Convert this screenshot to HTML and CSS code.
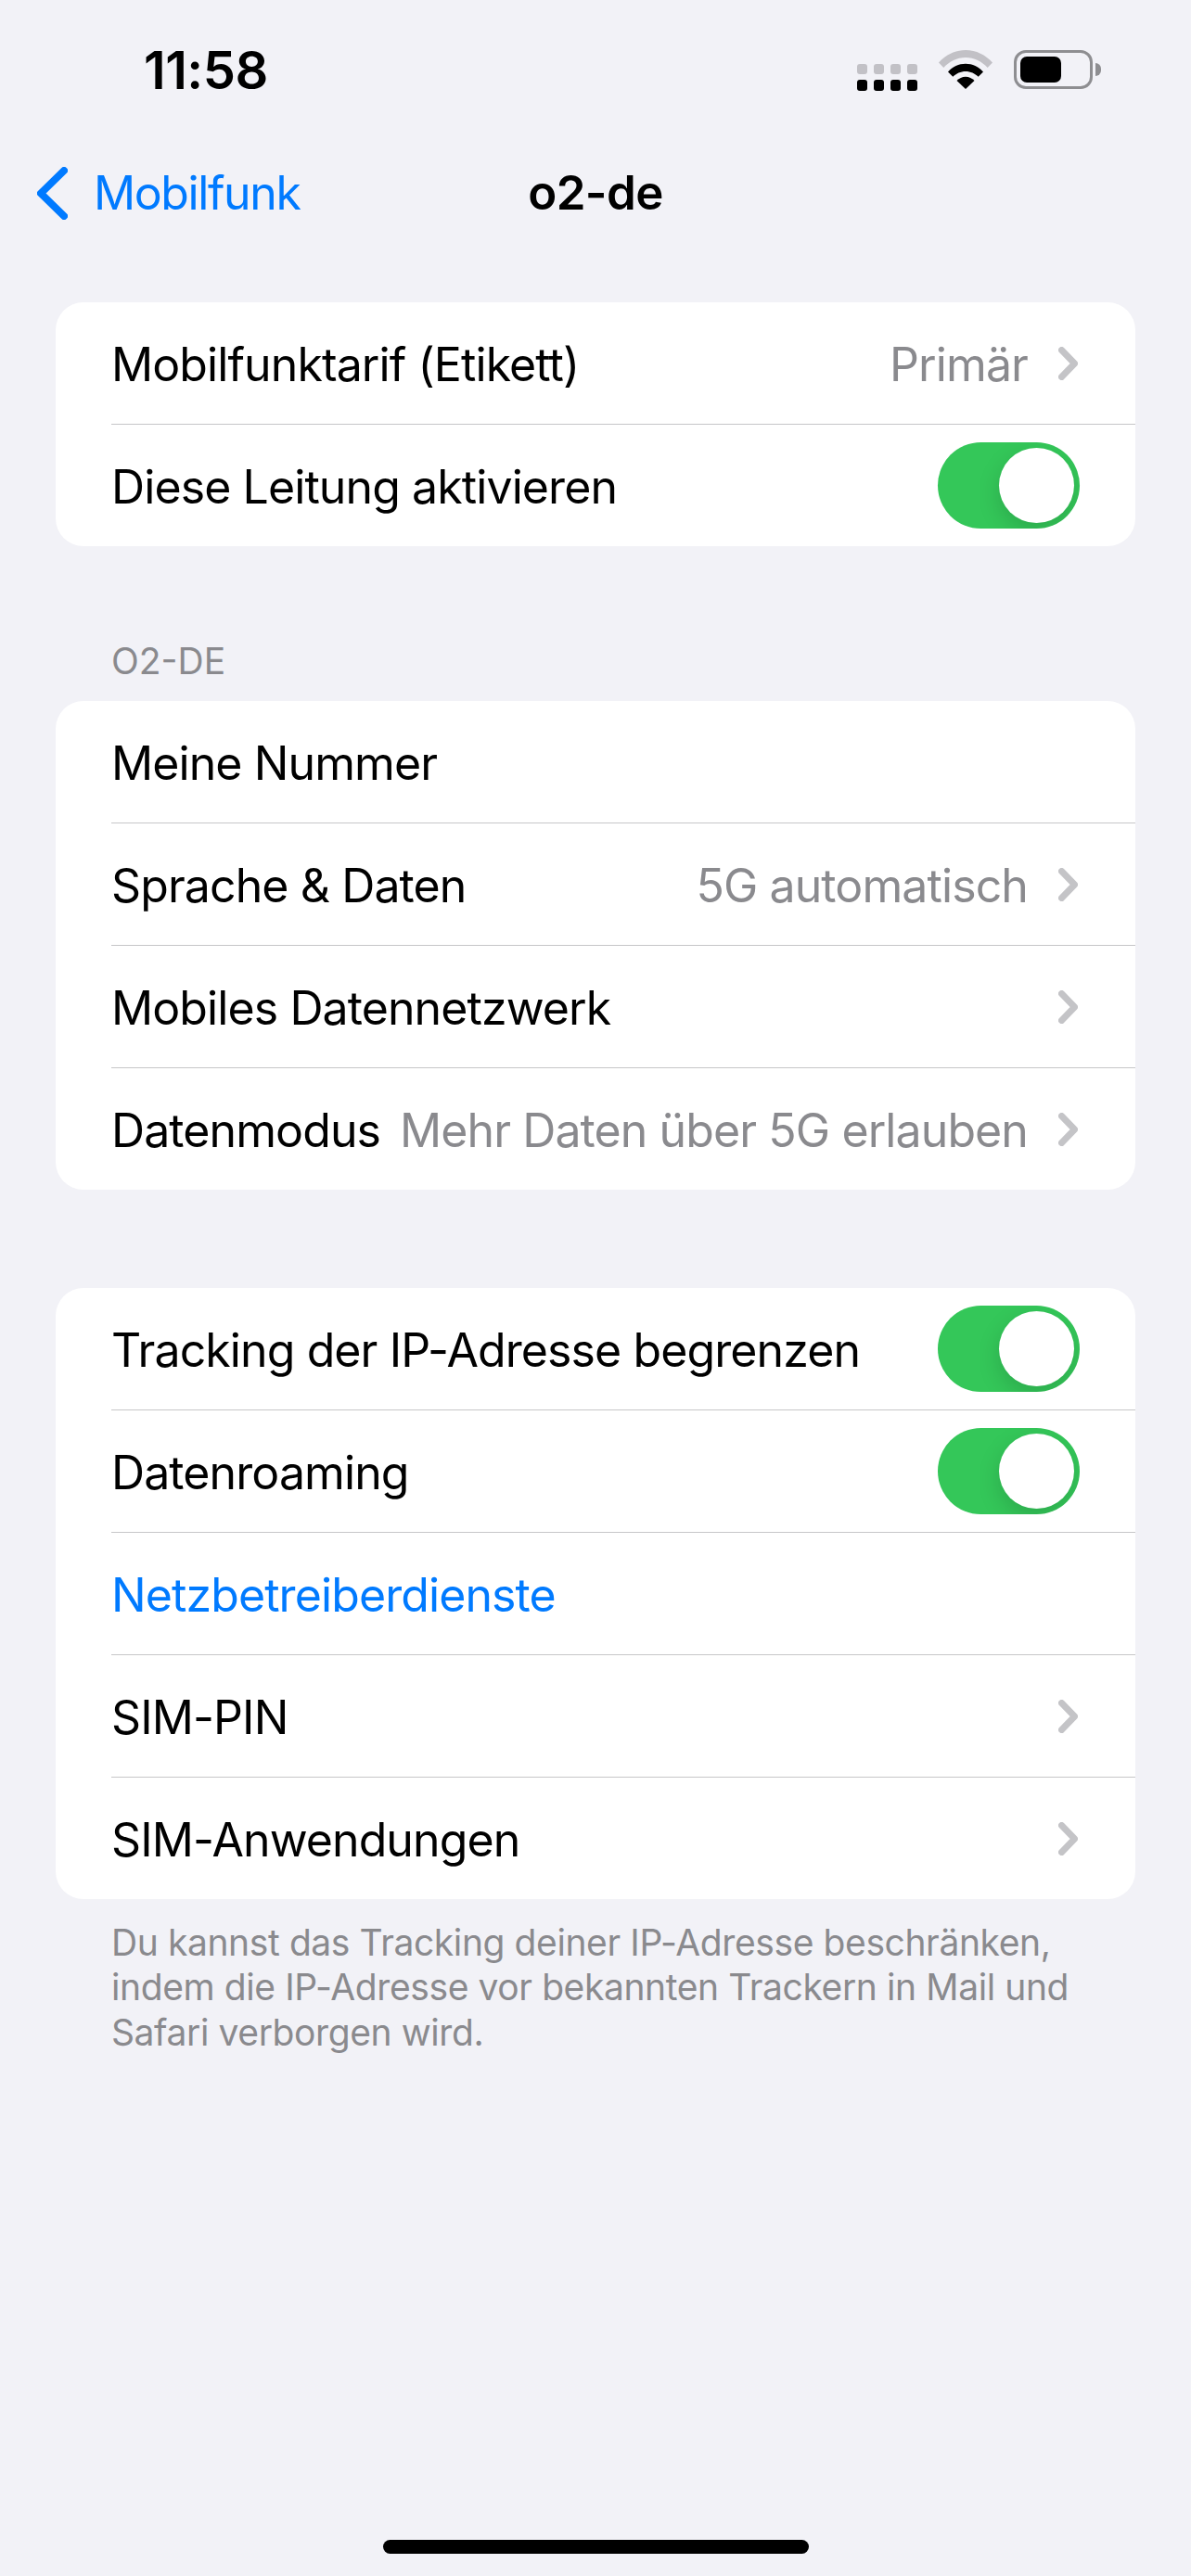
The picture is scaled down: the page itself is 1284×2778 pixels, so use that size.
FILE: index.html
```html
<!DOCTYPE html>
<html lang="de">
<head>
  <meta charset="UTF-8" />
  <title>o2-de</title>
  <link rel="stylesheet" href="styles.css">
</head>
<body>
  <div class="screen">
    <!-- Statusleiste -->
    <div class="status-bar">
      <span class="time">11:58</span>
      <div class="status-icons">
        <svg class="icon-signal" width="65" height="29" viewBox="0 0 65 29">
          <g fill="#c2c1c6">
            <rect x="0" y="0" width="11" height="11" rx="3"/>
            <rect x="18" y="0" width="11" height="11" rx="3"/>
            <rect x="36" y="0" width="11" height="11" rx="3"/>
            <rect x="54" y="0" width="11" height="11" rx="3"/>
          </g>
          <g fill="#000">
            <rect x="0" y="17" width="11" height="12" rx="3"/>
            <rect x="18" y="17" width="11" height="12" rx="3"/>
            <rect x="36" y="17" width="11" height="12" rx="3"/>
            <rect x="54" y="17" width="11" height="12" rx="3"/>
          </g>
        </svg>
        <svg class="icon-wifi" width="58" height="42" viewBox="0 0 58 42">
          <path fill="#c2c1c6" d="M0 13.500C7.500 5.200 17.600 0 29 0s21.500 5.200 29 13.500l-5.300 5.500C46.500 12.300 38.300 8 29 8S11.500 12.300 5.300 19z"/>
          <path fill="#000" d="M10 23.500C15 18.200 21.600 14.800 29 14.800s14 3.400 19 8.700l-5.300 5.300C39.200 25.300 34.300 23 29 23s-10.200 2.300-13.700 5.800z"/>
          <path fill="#000" d="M19.500 33C22 30.400 25.300 28.800 29 28.800s7 1.600 9.500 4.200L29 42z"/>
        </svg>
        <div class="battery">
          <div class="battery-body"><div class="battery-fill"></div></div>
          <div class="battery-nub"></div>
        </div>
      </div>
    </div>

    <!-- Navigation -->
    <div class="nav-bar">
      <a class="back-link">
        <svg width="33" height="57" viewBox="0 0 33 57">
          <path d="M29 4 4 28.500 29 53" fill="none" stroke="#007aff" stroke-width="8" stroke-linecap="round" stroke-linejoin="round"/>
        </svg>
        <span>Mobilfunk</span>
      </a>
      <span class="nav-title">o2-de</span>
    </div>

    <div class="content">
      <div class="card first-card">
        <div class="row">
          <span class="label">Mobilfunktarif (Etikett)</span>
          <span class="value">Primär</span>
          <svg class="chevron" width="21" height="36" viewBox="0 0 21 36"><path d="M3.500 3.500 17.500 18 3.500 32.500"/></svg>
        </div>
        <div class="row">
          <span class="label">Diese Leitung aktivieren</span>
          <div class="toggle"><div class="knob"></div></div>
        </div>
      </div>

      <div class="section-title">O2-DE</div>
      <div class="card">
        <div class="row">
          <span class="label">Meine Nummer</span>
        </div>
        <div class="row">
          <span class="label">Sprache &amp; Daten</span>
          <span class="value">5G automatisch</span>
          <svg class="chevron" width="21" height="36" viewBox="0 0 21 36"><path d="M3.500 3.500 17.500 18 3.500 32.500"/></svg>
        </div>
        <div class="row">
          <span class="label">Mobiles Datennetzwerk</span>
          <svg class="chevron" width="21" height="36" viewBox="0 0 21 36"><path d="M3.500 3.500 17.500 18 3.500 32.500"/></svg>
        </div>
        <div class="row">
          <span class="label">Datenmodus</span>
          <span class="value">Mehr Daten über 5G erlauben</span>
          <svg class="chevron" width="21" height="36" viewBox="0 0 21 36"><path d="M3.500 3.500 17.500 18 3.500 32.500"/></svg>
        </div>
      </div>

      <div class="card third-card">
        <div class="row">
          <span class="label">Tracking der IP-Adresse begrenzen</span>
          <div class="toggle"><div class="knob"></div></div>
        </div>
        <div class="row">
          <span class="label">Datenroaming</span>
          <div class="toggle"><div class="knob"></div></div>
        </div>
        <div class="row">
          <span class="label link">Netzbetreiberdienste</span>
        </div>
        <div class="row">
          <span class="label">SIM-PIN</span>
          <svg class="chevron" width="21" height="36" viewBox="0 0 21 36"><path d="M3.500 3.500 17.500 18 3.500 32.500"/></svg>
        </div>
        <div class="row">
          <span class="label">SIM-Anwendungen</span>
          <svg class="chevron" width="21" height="36" viewBox="0 0 21 36"><path d="M3.500 3.500 17.500 18 3.500 32.500"/></svg>
        </div>
      </div>

      <p class="footnote">Du kannst das Tracking deiner IP-Adresse beschränken, indem die IP-Adresse vor bekannten Trackern in Mail und Safari verborgen wird.</p>
    </div>

    <div class="home-indicator"></div>
  </div>
</body>
</html>
```

FILE: styles.css
```css
* { margin: 0; padding: 0; box-sizing: border-box; }
html, body { height: 100%; }
body {
  background: #f2f2f7;
  font-family: 'Inter', 'Liberation Sans', sans-serif;
  color: #000;
}
.screen {
  height: 2778px;
  display: flex;
  flex-direction: column;
}
/* Statusleiste */
.status-bar {
  height: 150px;
  padding: 54px 97px 0 155px;
  display: flex;
  justify-content: space-between;
  align-items: flex-start;
}
.time {
  font-size: 56px;
  font-weight: 600;
  line-height: 44px;
  letter-spacing: -0.5px;
}
.status-icons {
  display: flex;
  align-items: flex-start;
}
.icon-signal { margin-top: 15px; margin-right: 23px; }
.icon-wifi { margin-right: 23px; }
.battery { display: flex; align-items: center; gap: 3px; }
.battery-body {
  width: 85px;
  height: 42px;
  border: 3px solid #8e8e91;
  border-radius: 13px;
  padding: 4px;
}
.battery-fill {
  width: 44px;
  height: 100%;
  background: #000;
  border-radius: 7px;
}
.battery-nub {
  width: 6px;
  height: 14px;
  background: #8e8e91;
  border-radius: 0 7px 7px 0;
}
/* Navigation */
.nav-bar {
  height: 114px;
  display: flex;
  align-items: center;
  justify-content: center;
  position: relative;
}
.back-link {
  position: absolute;
  left: 40px;
  top: 28px;
  display: flex;
  align-items: center;
  gap: 28px;
  color: #007aff;
  font-size: 50px;
  letter-spacing: -1.4px;
}
.back-link svg { display: block; }
.nav-title {
  font-size: 51px;
  font-weight: 600;
  letter-spacing: -0.6px;
}
/* Karten */
.content { padding: 0 60px; }
.card {
  background: #fff;
  border-radius: 30px;
  overflow: hidden;
}
.first-card { margin-top: 62px; }
.third-card { margin-top: 106px; }
.row {
  height: 132px;
  margin-left: 60px;
  padding-right: 62px;
  display: flex;
  align-items: center;
}
.row:first-child { height: 131px; }
.row + .row { border-top: 1px solid #c6c6c8; }
.label {
  font-size: 50px;
  letter-spacing: -0.9px;
  white-space: nowrap;
  margin-right: auto;
  padding-top: 2px;
}
.link { color: #007aff; }
.value {
  font-size: 50px;
  letter-spacing: -0.9px;
  color: #8a8a8e;
  white-space: nowrap;
  margin-right: 33px;
  padding-top: 2px;
}
.chevron { flex-shrink: 0; }
.chevron path {
  fill: none;
  stroke: #c4c4c7;
  stroke-width: 7;
  stroke-linecap: round;
  stroke-linejoin: round;
}
.toggle {
  width: 153px;
  height: 93px;
  margin-right: -2px;
  background: #34c759;
  border-radius: 47px;
  padding: 6px;
  display: flex;
  justify-content: flex-end;
  overflow: hidden;
}
.knob {
  width: 81px;
  height: 81px;
  background: #fff;
  border-radius: 50%;
  box-shadow: 0 9px 24px rgba(0, 0, 0, 0.15);
}
.section-title {
  margin-top: 100px;
  padding-left: 60px;
  height: 67px;
  font-size: 39px;
  line-height: 47px;
  color: #8a8a8e;
}
.footnote {
  margin-top: 23px;
  padding: 0 60px;
  font-size: 39px;
  line-height: 48.300px;
  letter-spacing: -0.4px;
  color: #8a8a8e;
}
.home-indicator {
  width: 459px;
  height: 15px;
  margin: auto auto 0;
  position: relative;
  top: -24px;
  background: #000;
  border-radius: 8px;
}
```
